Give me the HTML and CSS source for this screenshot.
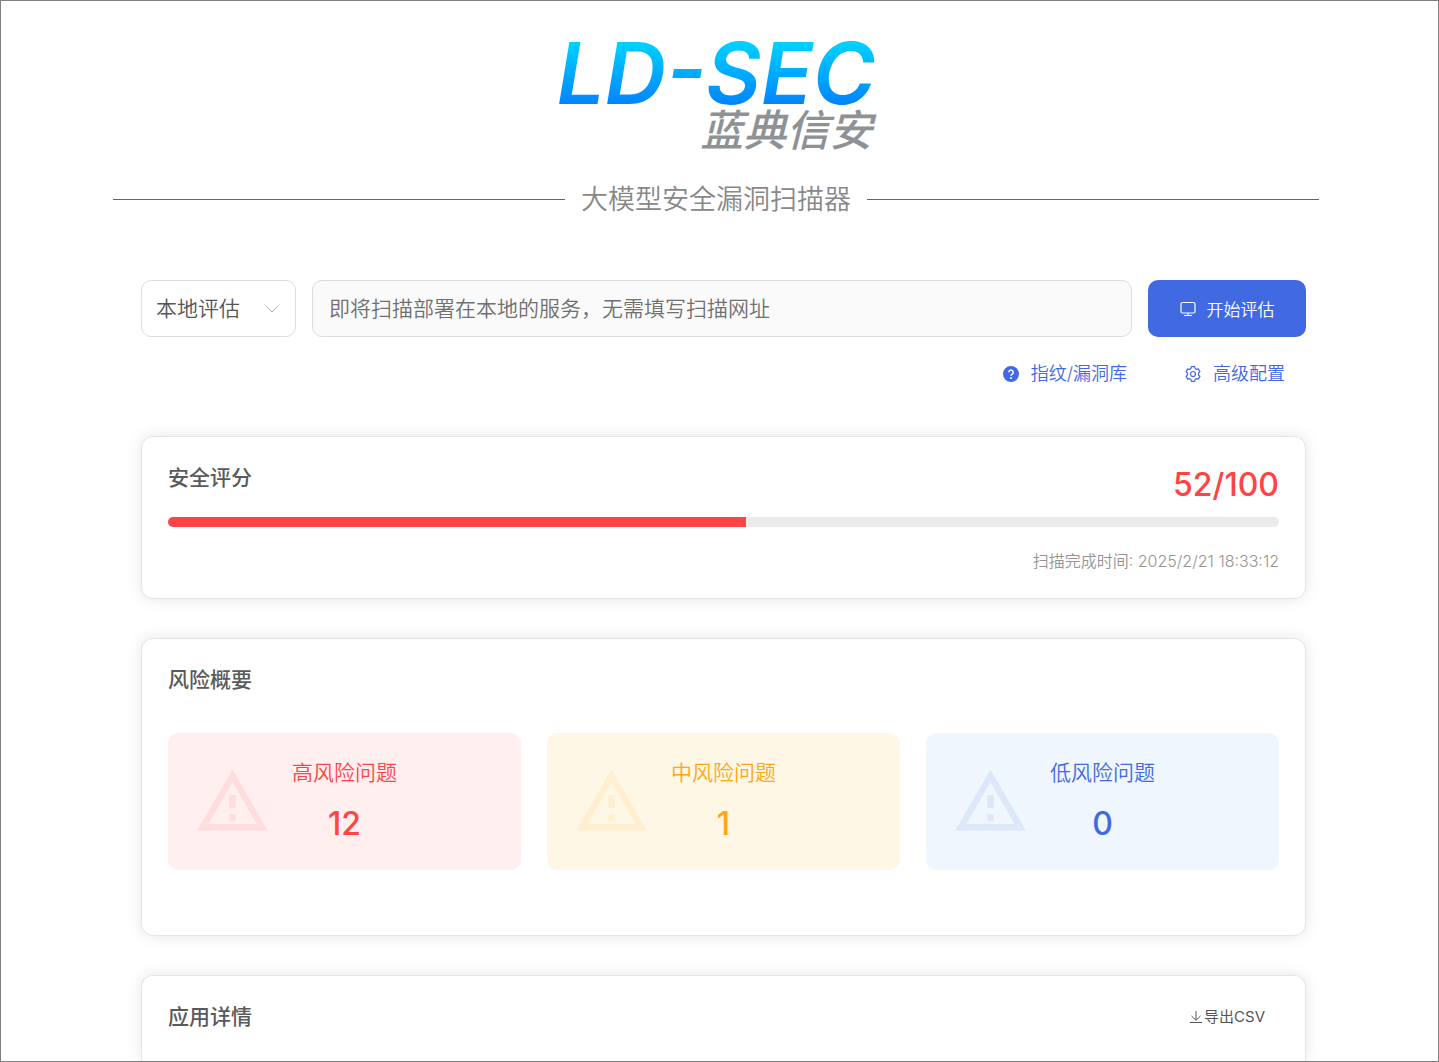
FILE: index.html
```html
<!DOCTYPE html>
<html lang="zh-CN">
<head>
<meta charset="utf-8">
<meta name="viewport" content="width=device-width, initial-scale=1">
<title>大模型安全漏洞扫描器</title>
<link rel="stylesheet" href="styles.css">
</head>
<body>
<div class="page">
  <header class="hero">
    <div class="logo">
      <span class="logo-latin">LD-SEC</span>
      <span class="logo-cn">蓝典信安</span>
    </div>
    <h1 class="title">大模型安全漏洞扫描器</h1>
  </header>

  <main class="main">
    <form class="scan">
      <div class="select-box">
        <select class="mode" aria-label="评估方式">
          <option>本地评估</option>
        </select>
        <svg class="chevron" viewBox="0 0 14 14" aria-hidden="true"><path d="M1 4l6 6 6-6"/></svg>
      </div>
      <input class="target" type="text" aria-label="扫描网址" placeholder="即将扫描部署在本地的服务，无需填写扫描网址">
      <button class="start" type="button">
        <svg class="icon-line" viewBox="0 0 16 16" aria-hidden="true"><rect x="1" y="1.500" width="14" height="10.500" rx="1.500"/><path d="M8 12v2.500M4 14.500h8"/></svg>
        开始评估
      </button>
    </form>

    <nav class="links">
      <a class="link" href="#library">
        <svg class="icon-solid" viewBox="0 0 16 16" aria-hidden="true"><circle cx="8" cy="8" r="8" fill="currentColor"/><path d="M5.800 6.200a2.200 2.200 0 1 1 3.400 1.900c-.8.500-1.200.9-1.200 1.700" fill="none" stroke="#fff" stroke-width="1.500"/><circle cx="8" cy="12" r="1" fill="#fff"/></svg>
        指纹/漏洞库
      </a>
      <a class="link" href="#settings">
        <svg class="icon-line" viewBox="0 0 16 16" aria-hidden="true"><path d="M5.900 2.600 6.400.7h3.200l.5 1.900 1.300.8 1.900-.5 1.600 2.700-1.400 1.400v2l1.400 1.400-1.600 2.700-1.900-.5-1.300.8-.5 1.900H6.400l-.5-1.900-1.300-.8-1.900.5-1.600-2.700L2.500 9V7L1.100 5.600l1.600-2.700 1.900.5z" stroke-linejoin="round"/><circle cx="8" cy="8" r="2.500"/></svg>
        高级配置
      </a>
    </nav>

    <section class="card">
      <div class="score-head">
        <h2 class="heading">安全评分</h2>
        <strong class="score">52/100</strong>
      </div>
      <div class="bar" role="progressbar" aria-label="安全评分" aria-valuenow="52" aria-valuemin="0" aria-valuemax="100"><div class="bar-fill" style="width: 52%"></div></div>
      <p class="time">扫描完成时间: 2025/2/21 18:33:12</p>
    </section>

    <section class="card card-risk">
      <h2 class="heading">风险概要</h2>
      <div class="tiles">
        <div class="tile tile-high">
          <svg class="warn" viewBox="0 0 24 24" aria-hidden="true"><path d="M12 5.990 19.530 19H4.470L12 5.990M12 2 1 21h22L12 2zm1 14h-2v2h2v-2zm0-6h-2v4h2v-4z"/></svg>
          <div class="tile-text"><span class="tile-label">高风险问题</span><strong class="tile-count">12</strong></div>
        </div>
        <div class="tile tile-mid">
          <svg class="warn" viewBox="0 0 24 24" aria-hidden="true"><path d="M12 5.990 19.530 19H4.470L12 5.990M12 2 1 21h22L12 2zm1 14h-2v2h2v-2zm0-6h-2v4h2v-4z"/></svg>
          <div class="tile-text"><span class="tile-label">中风险问题</span><strong class="tile-count">1</strong></div>
        </div>
        <div class="tile tile-low">
          <svg class="warn" viewBox="0 0 24 24" aria-hidden="true"><path d="M12 5.990 19.530 19H4.470L12 5.990M12 2 1 21h22L12 2zm1 14h-2v2h2v-2zm0-6h-2v4h2v-4z"/></svg>
          <div class="tile-text"><span class="tile-label">低风险问题</span><strong class="tile-count">0</strong></div>
        </div>
      </div>
    </section>

    <section class="card card-details">
      <h2 class="heading">应用详情</h2>
      <button class="export" type="button">
        <svg class="icon-export" viewBox="0 0 14 14" aria-hidden="true"><path d="M7 1v9M2.500 6 7 10.300 11.500 6M1 12.500h12"/></svg>
        导出CSV
      </button>
    </section>
  </main>
</div>
</body>
</html>
```
FILE: styles.css
```css
* {
  box-sizing: border-box;
}

body {
  margin: 0;
  background: #fff;
  color: #5a5a5a;
  font-family: Inter, "Noto Sans CJK SC", sans-serif;
  font-weight: 350;
}

.page {
  display: flex;
  flex-direction: column;
  min-height: 100vh;
  border: 1px solid #808080;
}

.hero {
  display: flex;
  flex-direction: column;
  padding: 35px 119px 0 112px;
}

.logo {
  display: flex;
  flex-direction: column;
  align-self: center;
  align-items: flex-end;
}

.logo-latin {
  padding: 0 4px;
  font-size: 85px;
  font-style: italic;
  font-weight: 600;
  line-height: 76px;
  color: transparent;
  background: linear-gradient(#00d0ff 10%, #0084ff 90%);
  -webkit-background-clip: text;
  background-clip: text;
}

.logo-cn {
  padding-right: 7px;
  font-size: 43px;
  font-style: italic;
  font-weight: 500;
  line-height: 36px;
  color: #8e9294;
}

.title {
  display: flex;
  align-items: center;
  gap: 16px;
  margin: 32px 0 0;
  font-size: 27px;
  font-weight: 350;
  line-height: 40px;
  color: #888;
}

.title::before,
.title::after {
  content: "";
  flex: 1;
  height: 1px;
  margin-bottom: 2px;
  background: #666;
}

.main {
  display: flex;
  flex: 1;
  flex-direction: column;
  padding: 60px 132px 0 140px;
}

.scan {
  display: flex;
  gap: 16px;
  height: 57px;
}

.select-box {
  display: grid;
  align-items: center;
  width: 155px;
}

.mode,
.chevron {
  grid-area: 1 / 1;
}

.mode,
.target {
  height: 57px;
  padding: 0 16px;
  border: 1px solid #dcdde2;
  border-radius: 10px;
  font: inherit;
  font-size: 21px;
}

.mode {
  width: 100%;
  appearance: none;
  padding: 0 14px;
  background: #fff;
  color: #555;
}

.chevron {
  justify-self: end;
  width: 14px;
  height: 14px;
  margin-right: 17px;
  fill: none;
  stroke: #aaa;
  pointer-events: none;
}

.target {
  flex: 1;
  min-width: 0;
  background: #fafafa;
}

.target::placeholder {
  color: #707070;
}

.start {
  display: flex;
  align-items: center;
  justify-content: center;
  gap: 11px;
  width: 158px;
  border: 0;
  border-radius: 10px;
  background: #4169e1;
  color: #fff;
  font: inherit;
  font-size: 17px;
}

.icon-line,
.icon-solid {
  width: 16px;
  height: 16px;
}

.icon-line {
  fill: none;
  stroke: currentColor;
  stroke-width: 1.2;
}

.links {
  display: flex;
  justify-content: flex-end;
  gap: 58px;
  padding: 23px 21px 0 0;
}

.link {
  display: flex;
  align-items: center;
  gap: 12px;
  color: #4169e1;
  font-size: 18px;
  line-height: 28px;
  text-decoration: none;
}

.card {
  margin-top: 39px;
  padding: 26px;
  border: 1px solid #e4e5e9;
  border-radius: 12px;
  background: #fff;
  box-shadow: 0 0 16px rgba(0, 0, 0, 0.1);
}

.links + .card {
  margin-top: 48px;
}

.heading {
  margin: 0;
  font-size: 21px;
  font-weight: 500;
  line-height: 30px;
}

.score-head {
  display: flex;
  justify-content: space-between;
}

.score {
  padding-top: 2px;
  color: #ff4445;
  font-size: 32px;
  font-weight: 500;
  line-height: 40px;
}

.bar {
  height: 10px;
  margin-top: 12px;
  overflow: hidden;
  border-radius: 5px;
  background: #ebebeb;
}

.bar-fill {
  height: 100%;
  background: #ff4445;
}

.time {
  margin: 23px 0 0;
  color: #949494;
  font-size: 16px;
  line-height: 22px;
  text-align: right;
}

.card-risk {
  padding-bottom: 65px;
}

.tiles {
  display: grid;
  grid-template-columns: repeat(3, 1fr);
  gap: 26px;
  margin-top: 38px;
}

.tile {
  display: grid;
  grid-template-columns: 1fr auto 1fr;
  align-items: center;
  padding: 26px;
  border-radius: 10px;
}

.tile-high {
  background: #ffefef;
  color: #ff4445;
}

.tile-mid {
  background: #fff7e6;
  color: #ffa516;
}

.tile-low {
  background: #eff6fe;
  color: #4169e1;
}

.warn {
  width: 77px;
  height: 77px;
  fill: currentColor;
  opacity: 0.1;
}

.tile-text {
  display: flex;
  flex-direction: column;
  gap: 17px;
  text-align: center;
}

.tile-label {
  font-size: 21px;
  line-height: 28px;
}

.tile-count {
  font-size: 32px;
  font-weight: 500;
  line-height: 40px;
}

.card-details {
  display: flex;
  flex: 1;
  align-items: flex-start;
  justify-content: space-between;
  padding-bottom: 24px;
  border-bottom: 0;
  border-radius: 12px 12px 0 0;
}

.export {
  display: flex;
  align-items: center;
  gap: 1px;
  padding: 0 14px 0 0;
  border: 0;
  background: none;
  color: #555;
  font: inherit;
  font-size: 15px;
  font-weight: 400;
  line-height: 30px;
}

.icon-export {
  width: 14px;
  height: 14px;
  fill: none;
  stroke: currentColor;
}
```
